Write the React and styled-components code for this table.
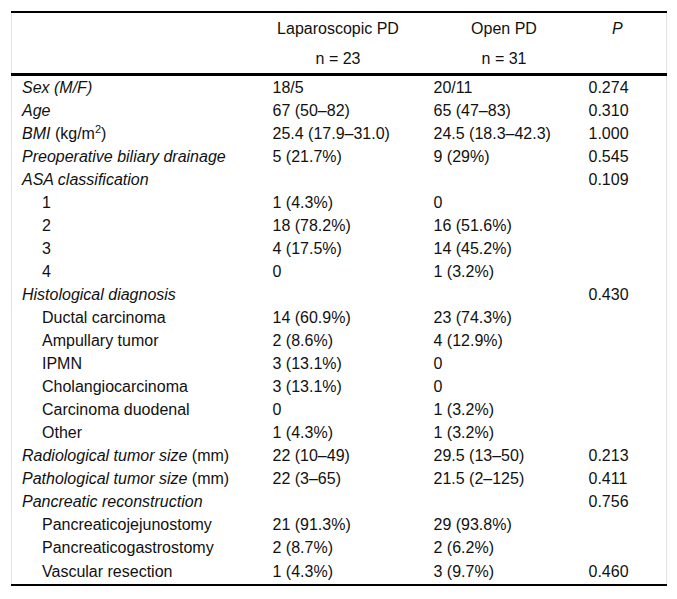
import React from 'react';
import styled, { createGlobalStyle } from 'styled-components';

const rows = [
  { label: 'Sex (M/F)', lap: '18/5', open: '20/11', p: '0.274' },
  { label: 'Age', lap: '67 (50–82)', open: '65 (47–83)', p: '0.310' },
  { label: 'BMI', unit: <> (kg/m<sup>2</sup>)</>, lap: '25.4 (17.9–31.0)', open: '24.5 (18.3–42.3)', p: '1.000' },
  { label: 'Preoperative biliary drainage', lap: '5 (21.7%)', open: '9 (29%)', p: '0.545' },
  { label: 'ASA classification', lap: '', open: '', p: '0.109' },
  { label: '1', sub: true, lap: '1 (4.3%)', open: '0' },
  { label: '2', sub: true, lap: '18 (78.2%)', open: '16 (51.6%)' },
  { label: '3', sub: true, lap: '4 (17.5%)', open: '14 (45.2%)' },
  { label: '4', sub: true, lap: '0', open: '1 (3.2%)' },
  { label: 'Histological diagnosis', lap: '', open: '', p: '0.430' },
  { label: 'Ductal carcinoma', sub: true, lap: '14 (60.9%)', open: '23 (74.3%)' },
  { label: 'Ampullary tumor', sub: true, lap: '2 (8.6%)', open: '4 (12.9%)' },
  { label: 'IPMN', sub: true, lap: '3 (13.1%)', open: '0' },
  { label: 'Cholangiocarcinoma', sub: true, lap: '3 (13.1%)', open: '0' },
  { label: 'Carcinoma duodenal', sub: true, lap: '0', open: '1 (3.2%)' },
  { label: 'Other', sub: true, lap: '1 (4.3%)', open: '1 (3.2%)' },
  { label: 'Radiological tumor size', unit: ' (mm)', lap: '22 (10–49)', open: '29.5 (13–50)', p: '0.213' },
  { label: 'Pathological tumor size', unit: ' (mm)', lap: '22 (3–65)', open: '21.5 (2–125)', p: '0.411' },
  { label: 'Pancreatic reconstruction', lap: '', open: '', p: '0.756' },
  { label: 'Pancreaticojejunostomy', sub: true, lap: '21 (91.3%)', open: '29 (93.8%)' },
  { label: 'Pancreaticogastrostomy', sub: true, lap: '2 (8.7%)', open: '2 (6.2%)' },
  { label: 'Vascular resection', sub: true, lap: '1 (4.3%)', open: '3 (9.7%)', p: '0.460' },
];

const App = () => {
  return (
    <>
      <GlobalStyle />
      <Page>
        <Table>
          <colgroup>
            <col style={{ width: 251 }} />
            <col style={{ width: 161 }} />
            <col style={{ width: 155 }} />
            <col />
          </colgroup>
          <thead>
            <tr>
              <HeadCell />
              <HeadCell>Laparoscopic PD</HeadCell>
              <HeadCell $shift>Open PD</HeadCell>
              <HeadCell $italic>P</HeadCell>
            </tr>
            <tr>
              <HeadCell $last />
              <HeadCell $last>n = 23</HeadCell>
              <HeadCell $last $shift>n = 31</HeadCell>
              <HeadCell $last />
            </tr>
          </thead>
          <tbody>
            {rows.map((r, i) => {
              const last = i === rows.length - 1;
              return (
                <tr key={i}>
                  <LabelCell $sub={r.sub} $last={last}>
                    {r.sub ? r.label : <em>{r.label}</em>}
                    {r.unit}
                  </LabelCell>
                  <Cell $last={last}>{r.lap}</Cell>
                  <Cell $last={last}>{r.open}</Cell>
                  <Cell $last={last}>{r.p || ''}</Cell>
                </tr>
              );
            })}
          </tbody>
        </Table>
      </Page>
    </>
  );
};

export default App;

const GlobalStyle = createGlobalStyle`
  body {
    margin: 0;
    background: #fff;
    font-family: "Liberation Sans", Arial, sans-serif;
    color: #111;
  }
`;

const Page = styled.div`
  width: 677px;
  height: 599px;
  padding: 11px 10px 0 11px;
  box-sizing: border-box;
`;

const Table = styled.table`
  width: 656px;
  table-layout: fixed;
  border-collapse: collapse;
  border-top: 2px solid #000;
  border-bottom: 2px solid #000;
  border-left: 1px solid #e4e4e4;
  border-right: 1px solid #e4e4e4;
  font-size: 16px;
  line-height: 19px;

  sup {
    font-size: 11px;
    line-height: 0;
    vertical-align: 6px;
  }
`;

const HeadCell = styled.th`
  height: 30px;
  padding: ${(p) => (p.$shift ? '0 10px 0 16px' : '0 15px 0 5px')};
  font-weight: normal;
  text-align: center;
  vertical-align: middle;
  font-style: ${(p) => (p.$italic ? 'italic' : 'normal')};
  border-bottom: ${(p) => (p.$last ? '3px solid #000' : 'none')};
`;

const Cell = styled.td`
  height: ${(p) => (p.$last ? '24px' : '23px')};
  padding: ${(p) => (p.$last ? '0 10px 1px' : '0 10px')};
  vertical-align: middle;
  white-space: nowrap;
`;

const LabelCell = styled(Cell)`
  padding-left: ${(p) => (p.$sub ? '30px' : '10px')};
`;
